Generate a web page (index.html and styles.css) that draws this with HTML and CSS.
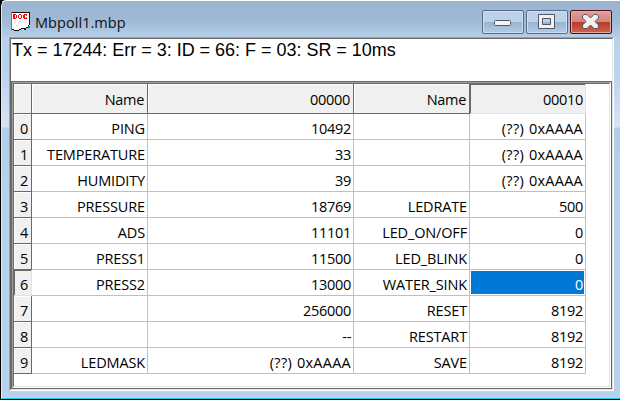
FILE: index.html
```
<!DOCTYPE html>
<html lang="en">
<head>
<meta charset="utf-8">
<title>Mbpoll1.mbp</title>
<link rel="stylesheet" href="styles.css">
</head>
<body>
<main class="window">
  <header class="titlebar">
    <svg class="doc" width="20" height="20" viewBox="0 0 20 20" shape-rendering="crispEdges">
      <path d="M0 0h19v14h-2v2h-2v2h-3v-1h-2v1H8v1H3v-1H0z" fill="#fff"/>
      <path d="M0 0h19v1H0zM18 0h1v13h-1zM17 13h1v2h-1zM15 15h2v1h-2zM13 16h2v2h-2zM10 16h3v1h-3zM8 17h2v1H8zM3 18h5v1H3zM1 17h2v1H1z" fill="#111"/>
      <path d="M0 0h1v18H0z" fill="#777"/>
      <path d="M2 2h3v1H2zM2 3h2v3H2zM5 3h1v3H5zM2 6h3v1H2zM8 2h2v1H8zM7 3h1v3H7zM10 3h1v3h-1zM8 6h2v1H8zM13 2h3v1h-3zM12 3h2v3h-2zM15 3h1v1h-1zM15 5h1v1h-1zM13 6h3v1h-3z" fill="#f00"/>
      <path d="M3 10h2v1H3zM7 9h3v1H7zM12 10h3v1h-3zM5 13h3v1H5z" fill="#ddd"/>
      <path d="M17 14h2v2h-2z" fill="#088"/>
    </svg>
    <h1 class="title">Mbpoll1.mbp</h1>
    <div class="buttons">
      <svg class="button" width="42" height="24" viewBox="0 0 40 22"><rect x="11.500" y="9.500" width="16" height="5" rx="1" fill="#f4f4f4" stroke="#535666"/></svg>
      <svg class="button" width="42" height="24" viewBox="0 0 40 22"><path d="M11.500 3.500h16v14h-16zM15.500 7.500v6h8v-6z" fill="#f1f1f1" fill-rule="evenodd" stroke="#535666"/></svg>
      <svg class="button close" width="42" height="24" viewBox="0 0 40 22"><path d="M13 3.500h3l3.500 3.500L23 3.500h3l1.500 1.500v2L24 10.500l3.500 3.500v2L26 17.500h-3L19.500 14 16 17.500h-3L11.500 16v-2l3.500-3.500L11.500 7V5z" fill="#f1f1f1" stroke="#535666" stroke-linejoin="round"/></svg>
    </div>
  </header>
  <section class="client">
    <div class="view">
      <p class="status">Tx = 17244: Err = 3: ID = 66: F = 03: SR = 10ms</p>
      <div class="pane">
        <div class="pane-edge">
          <div class="pane-inner">
            <table class="grid">
              <colgroup><col class="c0"><col class="c1"><col class="c2"><col class="c1"><col class="c1"></colgroup>
              <thead><tr><th></th><th>Name</th><th>00000</th><th>Name</th><th class="current">00010</th></tr></thead>
              <tbody>
                <tr><th>0</th><td class="name">PING</td><td>10492</td><td></td><td class="hex">(??) 0xAAAA</td></tr>
                <tr><th>1</th><td class="name">TEMPERATURE</td><td>33</td><td></td><td class="hex">(??) 0xAAAA</td></tr>
                <tr><th>2</th><td class="name">HUMIDITY</td><td>39</td><td></td><td class="hex">(??) 0xAAAA</td></tr>
                <tr><th>3</th><td class="name">PRESSURE</td><td>18769</td><td class="name">LEDRATE</td><td>500</td></tr>
                <tr><th>4</th><td class="name">ADS</td><td>11101</td><td class="name">LED_ON/OFF</td><td>0</td></tr>
                <tr><th>5</th><td class="name">PRESS1</td><td>11500</td><td class="name">LED_BLINK</td><td>0</td></tr>
                <tr><th class="current-row">6</th><td class="name">PRESS2</td><td>13000</td><td class="name">WATER_SINK</td><td class="selected">0</td></tr>
                <tr><th>7</th><td></td><td>256000</td><td class="name">RESET</td><td>8192</td></tr>
                <tr><th>8</th><td></td><td class="dash">--</td><td class="name">RESTART</td><td>8192</td></tr>
                <tr><th>9</th><td class="name">LEDMASK</td><td class="hex">(??) 0xAAAA</td><td class="name">SAVE</td><td>8192</td></tr>
              </tbody>
            </table>
          </div>
        </div>
      </div>
    </div>
  </section>
</main>
</body>
</html>
```
FILE: styles.css
```
* { box-sizing: border-box; }
body { margin: 0; background: #000; overflow: hidden; }
.window {
  width: 620px; height: 400px; padding: 0 6px 0 8px;
  border: solid; border-width: 1px 0 1px 1px; border-color: #fff #000 #000 #000;
  border-top-left-radius: 6px;
  background: linear-gradient(#99b4d1 0, #9fb9d6 20px, #b9d1ea 38px, #bbd2ec 70px, #d6e4f5 126px, #b4cde8 127px, #b9d1ea 200px);
  box-shadow: inset 1px 0 #dce9f5, inset 0 -1px #20d0e8;
}
.titlebar { display: flex; height: 36px; }
.doc { margin: 11px 0 0 2px; flex: none; }
.title { margin: 9px 0 0 4px; font: 14.500px/26px "Open Sans", sans-serif; color: #111; letter-spacing: .05px; flex: 1; }
.buttons { display: flex; gap: 2px; margin: 9px 2px 0 0; }
.button {
  border: 1px solid #586a85; border-radius: 2px;
  background: linear-gradient(#bdd2e8 0 48%, #98b2cf 49%, #b3cce5);
  box-shadow: inset 0 0 0 1px #d0e0f0;
}
.close { border-color: #45101c; background: linear-gradient(#e2a097, #d3837a 48%, #b73a25 49%, #cf6550); box-shadow: inset 0 0 0 1px #e6aaa0; }
.client { height: 354px; width: 605px; background: #fff; border: 1px solid; border-color: #a0a0a0 #fff #fff #a0a0a0; }
.view { height: 352px; border: 1px solid; border-color: #696969 #e3e3e3 #e3e3e3 #696969; }
.status { margin: 0; height: 42px; padding-left: 1px; font: 18px/22px "Liberation Sans", sans-serif; letter-spacing: -.02px; color: #000; }
.pane { height: 308px; border: 1px solid #696969; }
.pane-edge { height: 306px; border: 1px solid; border-color: #a0a0a0 #fff #fff #a0a0a0; }
.pane-inner { height: 304px; border: 1px solid; border-color: #696969 #e3e3e3 #e3e3e3 #696969; }
.grid { border-collapse: separate; border-spacing: 0; table-layout: fixed; width: 572px; font: 14.500px/20px "Open Sans", sans-serif; color: #000; }
.c0 { width: 18px; } .c1 { width: 116px; } .c2 { width: 206px; }
td, th { height: 26px; padding: 5px 2px 0 0; text-align: right; font-weight: 400; border: solid #c0c0c0; border-width: 0 1px 1px 0; line-height: 20px; letter-spacing: -.3px; white-space: nowrap; }
.name { letter-spacing: -.15px; }
.hex { letter-spacing: .25px; word-spacing: 1px; padding-right: 2px; }
th { background: #f0f0f0; border-color: #696969; box-shadow: inset 1px 1px #fff; }
tbody th { padding-right: 3px; }
thead th { height: 30px; padding-top: 3px; padding-right: 3px; }
.current { border-color: #e3e3e3; box-shadow: inset 1px 1px #696969; }
thead th.current { padding-right: 2px; }
.current-row { border-color: #e3e3e3; box-shadow: inset 1px 1px #696969; }
.selected { background: #0078d7; color: #fff; box-shadow: inset 0 0 0 1px #fff; }
```
